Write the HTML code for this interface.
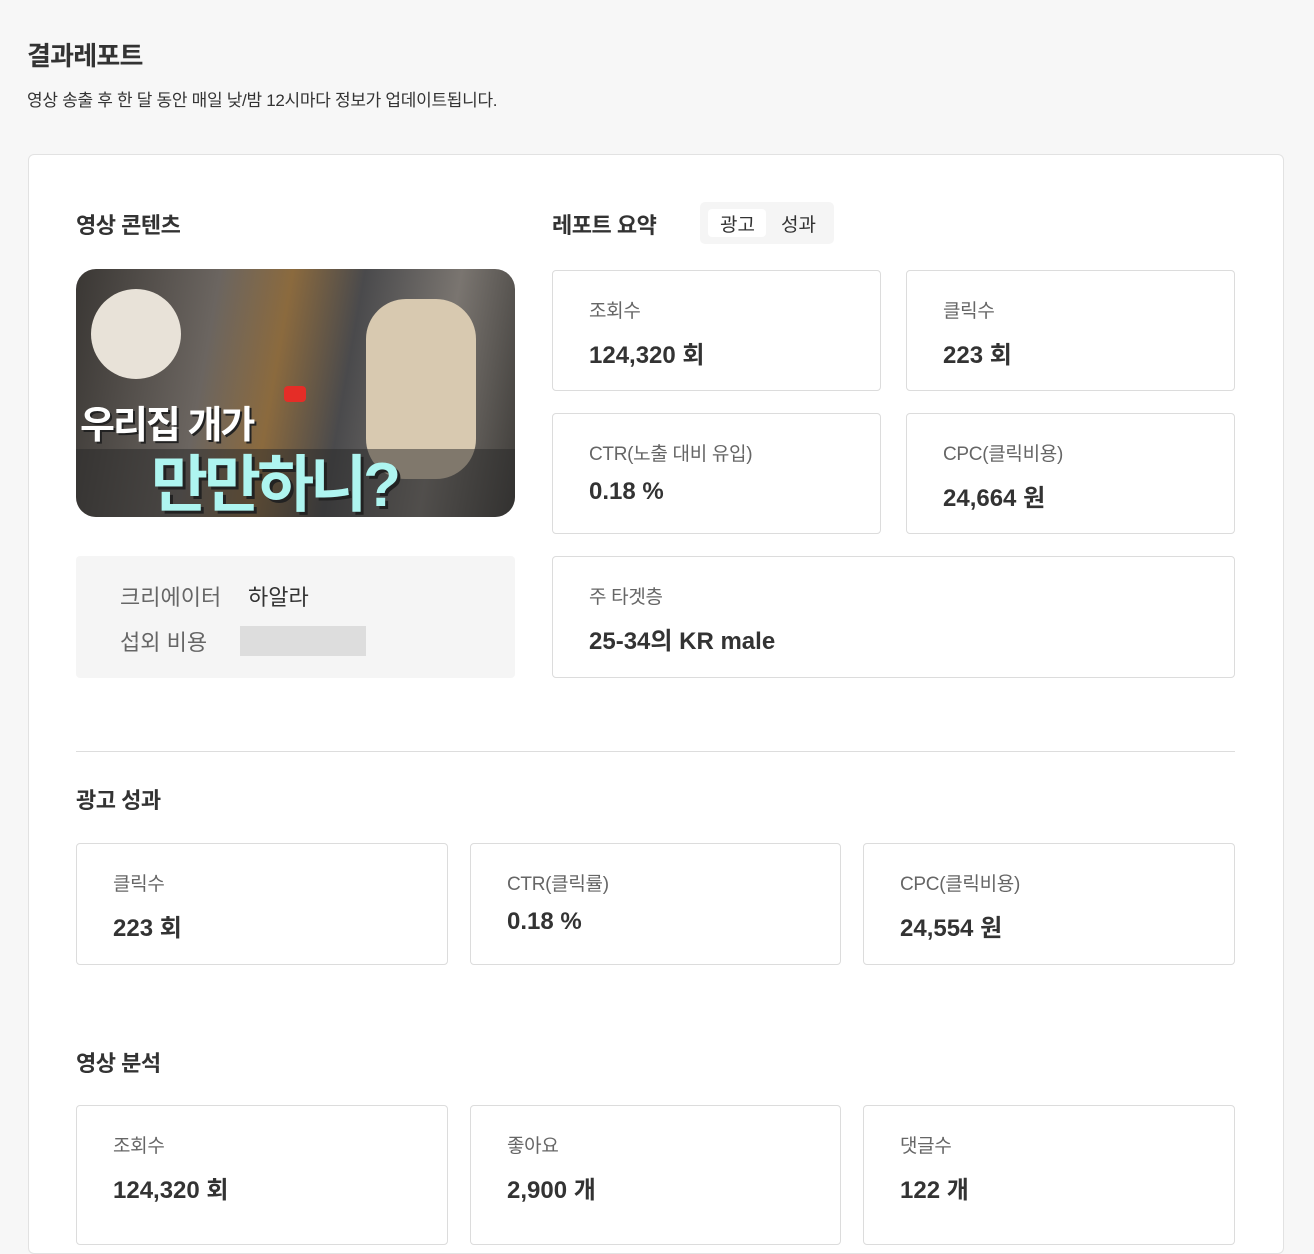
<!DOCTYPE html>
<html><head><meta charset="utf-8"><style>
*{box-sizing:border-box;margin:0;padding:0}
body{width:1314px;height:1220px;overflow:hidden;background:#f7f7f7;font-family:"Liberation Sans","Noto Sans CJK KR",sans-serif;color:#333;position:relative}
.a{position:absolute}
h1{position:absolute;left:27px;top:36px;font-size:26px;font-weight:700;color:#333;letter-spacing:-0.8px}
.sub{left:27px;top:86px;font-size:17px;color:#333;letter-spacing:-0.3px}
.card{left:28px;top:154px;width:1256px;height:1100px;background:#fff;border:1px solid #e2e2e2;border-radius:6px}
.h2{font-size:22px;font-weight:700;color:#333;letter-spacing:-0.5px}
.box{position:absolute;border:1px solid #dcdcdc;border-radius:4px;background:#fff}
.box .l{position:absolute;left:36px;top:25px;font-size:19px;color:#666;letter-spacing:-0.3px}
.box .v{position:absolute;left:36px;top:64px;font-size:24px;font-weight:700;color:#333;letter-spacing:0}
</style></head><body>
<h1>결과레포트</h1>
<div class="a sub">영상 송출 후 한 달 동안 매일 낮/밤 12시마다 정보가 업데이트됩니다.</div>
<div class="a card"></div>
<div class="a h2" style="left:76px;top:208px">영상 콘텐츠</div>
<div class="a h2" style="left:552px;top:208px">레포트 요약</div>
<div class="a" style="left:700px;top:202px;width:134px;height:42px;background:#f5f5f5;border-radius:5px"></div>
<div class="a" style="left:708px;top:209px;width:58px;height:28px;background:#fff;border-radius:4px"></div>
<div class="a" style="left:720px;top:210px;font-size:19px;color:#333">광고</div>
<div class="a" style="left:781px;top:210px;font-size:19px;color:#333">성과</div>

<div class="a" style="left:76px;top:269px;width:439px;height:248px;border-radius:20px;overflow:hidden;background:linear-gradient(100deg,#3a3734 0%,#6b6560 30%,#8b6a3e 45%,#4a4a4c 60%,#7a7570 80%,#3d3b38 100%)">
<div class="a" style="left:15px;top:20px;width:90px;height:90px;border-radius:50%;background:#e8e2d8"></div>
<div class="a" style="left:290px;top:30px;width:110px;height:180px;border-radius:40px;background:#d8c9b0"></div>
<div class="a" style="left:0;top:180px;width:439px;height:68px;background:rgba(40,40,40,.5)"></div>
<div class="a" style="left:208px;top:117px;width:22px;height:16px;background:#e52d27;border-radius:4px"></div>
<div class="a" style="left:4px;top:125px;font-size:38px;font-weight:700;color:#fff;text-shadow:2px 2px 0 #222;letter-spacing:-2px">우리집 개가</div>
<div class="a" style="left:75px;top:165px;font-size:62px;font-weight:700;color:#aef5f0;text-shadow:3px 3px 0 #222;letter-spacing:-4px">만만하니?</div>
</div>

<div class="a" style="left:76px;top:556px;width:439px;height:122px;background:#f5f5f5;border-radius:4px"></div>
<div class="a" style="left:120px;top:580px;font-size:22px;color:#666">크리에이터</div>
<div class="a" style="left:248px;top:580px;font-size:22px;color:#333">하알라</div>
<div class="a" style="left:120px;top:625px;font-size:22px;color:#666">섭외 비용</div>
<div class="a" style="left:240px;top:626px;width:126px;height:30px;background:#ddd"></div>

<div class="box" style="left:552px;top:270px;width:329px;height:121px"><div class="l">조회수</div><div class="v">124,320 회</div></div>
<div class="box" style="left:906px;top:270px;width:329px;height:121px"><div class="l">클릭수</div><div class="v">223 회</div></div>
<div class="box" style="left:552px;top:413px;width:329px;height:121px"><div class="l">CTR(노출 대비 유입)</div><div class="v">0.18 %</div></div>
<div class="box" style="left:906px;top:413px;width:329px;height:121px"><div class="l">CPC(클릭비용)</div><div class="v">24,664 원</div></div>
<div class="box" style="left:552px;top:556px;width:683px;height:122px"><div class="l">주 타겟층</div><div class="v">25-34의 KR male</div></div>

<div class="a" style="left:76px;top:751px;width:1159px;height:1px;background:#ddd"></div>
<div class="a h2" style="left:76px;top:783px">광고 성과</div>
<div class="box" style="left:76px;top:843px;width:372px;height:122px"><div class="l">클릭수</div><div class="v">223 회</div></div>
<div class="box" style="left:470px;top:843px;width:371px;height:122px"><div class="l">CTR(클릭률)</div><div class="v">0.18 %</div></div>
<div class="box" style="left:863px;top:843px;width:372px;height:122px"><div class="l">CPC(클릭비용)</div><div class="v">24,554 원</div></div>

<div class="a h2" style="left:76px;top:1046px">영상 분석</div>
<div class="box" style="left:76px;top:1105px;width:372px;height:140px"><div class="l">조회수</div><div class="v">124,320 회</div></div>
<div class="box" style="left:470px;top:1105px;width:371px;height:140px"><div class="l">좋아요</div><div class="v">2,900 개</div></div>
<div class="box" style="left:863px;top:1105px;width:372px;height:140px"><div class="l">댓글수</div><div class="v">122 개</div></div>
</body></html>
